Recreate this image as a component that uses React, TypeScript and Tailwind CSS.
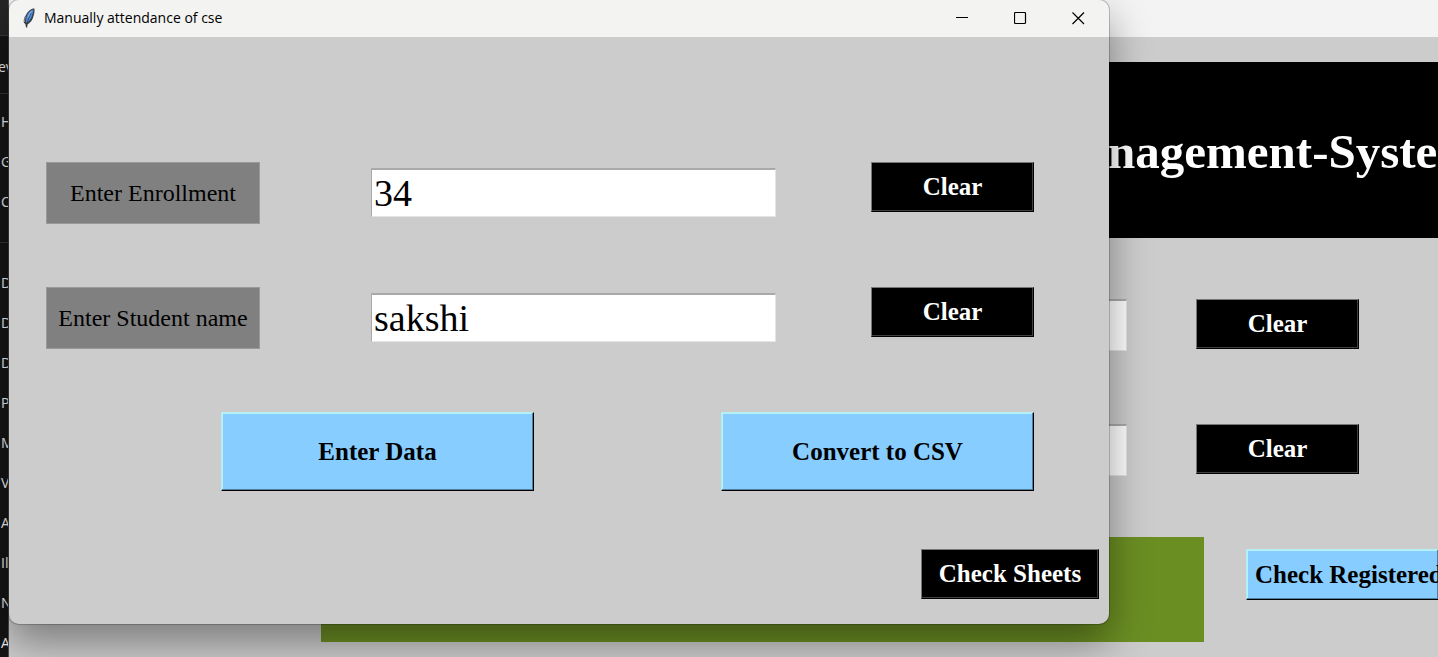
import { useState } from "react";
import type { ReactNode } from "react";

const serif = "font-['Liberation_Serif',serif]";

type ButtonProps = { children: ReactNode; className: string; onClick?: () => void };

function DarkButton({ children, className, onClick }: ButtonProps) {
  return (
    <button
      type="button"
      onClick={onClick}
      className={`shrink-0 border border-t-[#777] border-l-[#777] border-r-black border-b-black bg-black text-[25px] leading-7 font-bold whitespace-nowrap text-white shadow-[inset_-1px_-1px_0_#404040] ${className}`}
    >
      {children}
    </button>
  );
}

function BlueButton({ children, className, onClick }: ButtonProps) {
  return (
    <button
      type="button"
      onClick={onClick}
      className={`shrink-0 border border-t-[#b4eef2] border-l-[#b4eef2] border-r-black border-b-black bg-[#87cdff] text-[25px] leading-7 font-bold whitespace-nowrap text-black shadow-[inset_-1px_-1px_0_#4f7f9f,inset_1px_1px_0_#b4f2f8] ${className}`}
    >
      {children}
    </button>
  );
}

type FieldProps = { id: string; label: string; value: string; onChange: (v: string) => void };

function FieldRow({ id, label, value, onChange }: FieldProps) {
  return (
    <div className="flex items-start pr-[75px] pl-[37px]">
      <label
        htmlFor={id}
        className="flex h-[62px] w-[214px] shrink-0 items-center justify-center border border-[#999] bg-[#808080] text-2xl text-black"
      >
        {label}
      </label>
      <input
        id={id}
        type="text"
        value={value}
        onChange={(e) => onChange(e.target.value)}
        className="mt-1.5 mr-[95px] ml-[111px] h-[49px] min-w-0 flex-1 border border-t-2 border-t-[#a9a9a9] border-r-[#e4e4e4] border-b-[#e4e4e4] border-l-[#a9a9a9] bg-white px-0.5 text-[38px] text-black outline-none"
      />
      <DarkButton className="h-[50px] w-[163px]" onClick={() => onChange("")}>
        Clear
      </DarkButton>
    </div>
  );
}

function Feather() {
  return (
    <svg viewBox="0 0 12 20" className="h-5 w-3" aria-hidden="true">
      <path d="M11.400 .6C8.400.4 5 3 3 7 1.400 8.600.4 11.400.8 14.600L2.400 16.200 3 19.600 4.200 19.400 4.400 16.400C7.400 14.800 9.600 12 10.400 8.400 11.400 6 11.800 3 11.400.6Z" fill="#3a3d44" />
      <path d="M10.400 1.600C7.800 2 5.200 4.400 4 7.600 3 10.400 2.800 12.800 3.200 15 6 13.600 8.200 10.800 9 7.800 9.800 5.600 10.600 3.800 10.400 1.600Z" fill="#4a86d0" />
      <path d="M9.400 2.400C7 3.400 5.200 6.200 4.400 9.400L5.400 10C6.600 7.400 8.200 4.800 9.400 2.400Z" fill="#84b0e4" />
      <path d="M8.200 5C6.200 8.400 4.600 12 3.600 18" fill="none" stroke="#23304a" strokeWidth=".6" />
      <path d="M2.600 8.600C1.800 10.200 1.500 12 1.700 14" fill="none" stroke="#9a9da3" strokeWidth=".9" />
    </svg>
  );
}

const files = ["D", "D", "D", "P", "M", "V", "A", "Il", "N", "A"];

function Sidebar() {
  return (
    <aside className="w-[9px] shrink-0 overflow-hidden border-r border-[#4a4a4a] bg-[#151515] font-['Open_Sans',sans-serif] text-sm text-[#f0f0f0]">
      <div className="h-9 border-b border-[#3a3a3a] bg-[#262626]" />
      <div className="-ml-0.5 flex h-[58px] items-center border-b border-[#333] pt-1">ev</div>
      <ul className="h-[149px] border-b border-[#333] pt-2 pl-px">
        {["H", "G", "C"].map((t) => (
          <li key={t} className="flex h-10 items-center">{t}</li>
        ))}
      </ul>
      <ul className="pt-5 pl-px">
        {files.map((t, i) => (
          <li key={i} className="flex h-10 items-center">{t}</li>
        ))}
      </ul>
    </aside>
  );
}

function BackRow({ id }: { id: string }) {
  return (
    <div className="flex items-start pr-[79px]">
      <input
        id={id}
        type="text"
        aria-label={id}
        className="mr-[69px] ml-[600px] h-[52px] min-w-0 flex-1 border border-t-2 border-t-[#a9a9a9] border-r-[#e4e4e4] border-b-[#e4e4e4] bg-white"
      />
      <DarkButton className="h-[50px] w-[163px]">Clear</DarkButton>
    </div>
  );
}

function MainWindow() {
  return (
    <main className="min-w-0 flex-1 overflow-hidden bg-[#ccc]">
      <div className="h-[37px] bg-[#f3f3f3]" />
      <header className="mt-[25px] flex h-44 items-center justify-end bg-black pt-1 text-white">
        <h1 className="w-[330px] overflow-hidden text-[49px] font-bold whitespace-nowrap">nagement-System</h1>
      </header>
      <div className="mt-[61px] flex flex-col gap-[73px]">
        <BackRow id="enrollment" />
        <BackRow id="name" />
      </div>
      <div className="mt-[61px] flex items-start">
        <div className="mr-[42px] ml-[312px] h-[105px] flex-1 bg-[#6b8e23]" />
        <BlueButton className="mt-3 h-[51px] w-48 overflow-hidden border-r-0 pl-2 text-left">Check Registered</BlueButton>
      </div>
    </main>
  );
}

function AttendanceWindow() {
  const [enrollment, setEnrollment] = useState("34");
  const [student, setStudent] = useState("sakshi");
  return (
    <section className="absolute top-0 right-[329px] left-[9px] overflow-hidden rounded-[10px] bg-[#ccc] pb-[25px] shadow-[0_0_0_1px_rgba(0,0,0,0.2),0_18px_40px_rgba(0,0,0,0.4)]">
      <div className="flex h-[37px] items-center bg-[#f3f3f2] pr-0.5 pb-px pl-3.5">
        <Feather />
        <h2 className="ml-[9px] flex-1 pb-px font-['Open_Sans',sans-serif] text-sm text-black">Manually attendance of cse</h2>
        <button type="button" aria-label="Minimize" className="flex h-full w-[58px] items-center justify-center">
          <svg viewBox="0 0 13 13" className="size-[13px]" aria-hidden="true">
            <path d="M0 5.500H12" stroke="#000" />
          </svg>
        </button>
        <button type="button" aria-label="Maximize" className="flex h-full w-[58px] items-center justify-center">
          <svg viewBox="0 0 13 13" className="size-[13px]" fill="none" stroke="#000" aria-hidden="true">
            <rect x=".5" y=".5" width="11" height="11" rx="1" strokeWidth="1.200" />
          </svg>
        </button>
        <button type="button" aria-label="Close" className="flex h-full w-[58px] items-center justify-center">
          <svg viewBox="0 0 13 13" className="size-[13px]" fill="none" stroke="#000" aria-hidden="true">
            <path d="M.5.5 12 12M12 .5.5 12" strokeWidth="1.200" />
          </svg>
        </button>
      </div>
      <div className="mt-[125px] flex flex-col gap-[63px]">
        <FieldRow id="front-enrollment" label="Enter Enrollment" value={enrollment} onChange={setEnrollment} />
        <FieldRow id="front-name" label="Enter Student name" value={student} onChange={setStudent} />
      </div>
      <div className="mt-[63px] flex justify-between pr-[75px] pl-[212px]">
        <BlueButton className="h-[79px] w-[313px]">Enter Data</BlueButton>
        <BlueButton className="h-[79px] w-[313px]">Convert to CSV</BlueButton>
      </div>
      <div className="mt-[58px] flex justify-end pr-2.5">
        <DarkButton className="h-[50px] w-[178px]">Check Sheets</DarkButton>
      </div>
    </section>
  );
}

export default function App() {
  return (
    <div className={`relative flex h-screen overflow-hidden ${serif}`}>
      <Sidebar />
      <MainWindow />
      <AttendanceWindow />
    </div>
  );
}
